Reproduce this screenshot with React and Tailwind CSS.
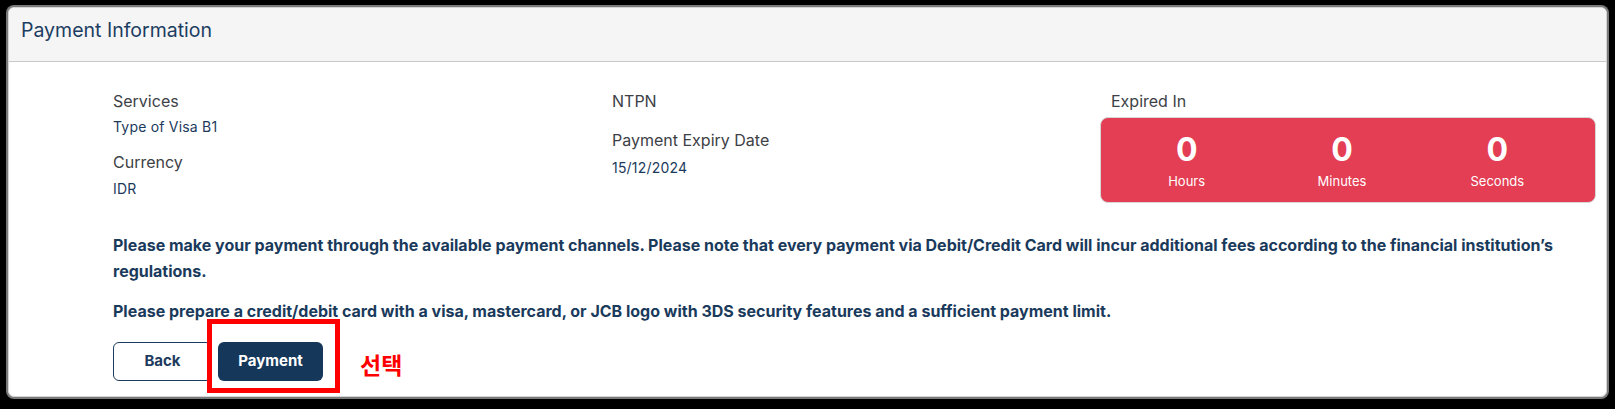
import React from 'react';

// Countdown cell inside the red "Expired In" box
const TimeCell = ({ value, label }) => (
  <div className="flex flex-col items-center">
    <span className="text-[32px] leading-[38px] font-bold text-white">{value}</span>
    <span className="text-[13px] leading-[18px] text-white mt-[3px]">{label}</span>
  </div>
);

const Label = ({ children, className = '' }) => (
  <div className={`text-[16px] leading-[22px] text-[#3d4146] ${className}`}>{children}</div>
);

const Value = ({ children, className = '' }) => (
  <div className={`text-[14px] leading-[22px] tracking-[0.2px] text-[#1b3a5c] ${className}`}>{children}</div>
);

export default function App() {
  return (
    <div className="w-[1615px] h-[409px] bg-black pt-[7px] pl-[8px]" style={{ fontFamily: 'Inter, "Noto Sans", sans-serif' }}>
      <div className="relative w-[1599px] h-[390px] bg-white rounded-[6px] overflow-hidden border border-[#d4d4d4] shadow-[0_0_0_2px_#7a7a7a]">
        {/* header */}
        <div className="h-[54px] bg-[#f5f5f5] border-b border-[#c9c9c9] pl-[12px] pt-[9px]">
          <h2 className="text-[19.5px] leading-[26px] text-[#1c3d62]">Payment Information</h2>
        </div>

        {/* body */}
        <div className="pl-[104px] pt-[28px]">
          <div className="grid grid-cols-[499px_488px_496px]">
            <div>
              <Label>Services</Label>
              <Value className="mt-[4px]">Type of Visa B1</Value>
              <Label className="mt-[13px]">Currency</Label>
              <Value className="mt-[5px]">IDR</Value>
            </div>
            <div>
              <Label>NTPN</Label>
              <Label className="mt-[17px]">Payment Expiry Date</Label>
              <Value className="mt-[6px]">15/12/2024</Value>
            </div>
            <div>
              <Label className="pl-[11px]">Expired In</Label>
              <div className="mt-[5px] h-[86px] rounded-[8px] bg-[#e33e53] border border-[#d6d6d6] grid grid-cols-3 pl-[8px] pr-[20px] pt-[13px]">
                <TimeCell value="0" label="Hours" />
                <TimeCell value="0" label="Minutes" />
                <TimeCell value="0" label="Seconds" />
              </div>
            </div>
          </div>

          <div className="mt-[29px] w-[1484px] text-[16px] leading-[26px] font-bold text-[#1a3a5c]">
            <p>
              Please make your payment through the available payment channels. Please note that every payment via Debit/Credit Card will incur additional fees according to the financial institution’s regulations.
            </p>
            <p className="mt-[14px]">
              Please prepare a credit/debit card with a visa, mastercard, or JCB logo with 3DS security features and a sufficient payment limit.
            </p>
          </div>

          <div className="mt-[18px] flex items-center gap-[6px]">
            <button className="w-[99px] h-[39px] rounded-[6px] border border-[#1d3b5e] bg-white text-[15px] font-bold text-[#1d3b5e]">
              Back
            </button>
            <button className="w-[105px] h-[39px] rounded-[6px] bg-[#15375a] text-[15px] font-bold text-white">
              Payment
            </button>
            <span
              className="ml-[31px] mt-[5px] text-[23px] leading-[30px] font-bold text-[#ff0000]"
              style={{ fontFamily: '"Noto Sans CJK KR", sans-serif' }}
            >
              선택
            </span>
          </div>
        </div>

        {/* annotation box around Payment button */}
        <div className="absolute left-[198px] top-[311px] w-[133px] h-[74px] border-[5px] border-[#ff0000]" />
      </div>
    </div>
  );
}
